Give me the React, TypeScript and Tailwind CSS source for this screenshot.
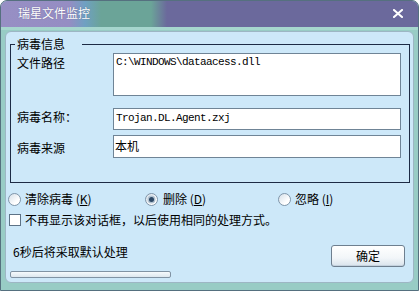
import React from "react";

function Radio({ checked }: { checked?: boolean }) {
  return (
    <span className="flex h-[13px] w-[13px] shrink-0 items-center justify-center rounded-full border border-[#7f95a9] bg-[linear-gradient(135deg,#d6e0e9,#ffffff_70%)]">
      {checked && (
        <span className="h-[5px] w-[5px] rounded-full bg-[#2e4966] shadow-[0_0_0_1.5px_#b4c4d2]" />
      )}
    </span>
  );
}

export default function App() {
  return (
    <div className="flex h-[291px] w-[419px] flex-col overflow-hidden rounded-t-[7px] border border-[#55707f] bg-[#98ccc5] text-[12px] leading-[16px] text-black [font-family:'Noto_Sans_CJK_SC',sans-serif]">
      {/* title bar */}
      <div className="flex h-[26px] shrink-0 items-center justify-between bg-[linear-gradient(90deg,#978fc4_0px,#958dc3_68px,#6fa0c2_84px,#6ba498_100px,#6ba498_150px,#6b699c_166px,#6b699c_100%)] pb-[3px] pl-[17px] pr-[15px]">
        <span className="text-[12px] leading-[16px] text-white [text-shadow:0_0_1px_rgba(40,40,80,0.5)]">
          瑞星文件监控
        </span>
        <svg width="10" height="9" viewBox="0 0 10 9" className="mt-[1px]">
          <path d="M1 1 L9 8 M9 1 L1 8" stroke="#ffffff" strokeWidth="2" strokeLinecap="square" />
        </svg>
      </div>

      {/* frame */}
      <div className="flex flex-1 flex-col border-t-[3px] border-[#a6d6ce] px-[4px] pb-[7px] pt-[1px]">
        <div className="flex flex-1 flex-col rounded-[6px] border border-[#9db6c4] bg-[#cde8f9]">
          {/* group box */}
          <fieldset className="ml-[4px] mr-[3px] mt-[4px] border border-[#1d2b45] pb-[24px] pl-[6px] pr-[7px] pt-[1px]">
            <legend className="-ml-[2px] pl-[2px] pr-[17px] leading-[16px]">病毒信息</legend>
            <div className="flex">
              <div className="w-[96px] pt-[2px]">文件路径</div>
              <div className="h-[43px] w-[288px] border border-[#6f8496] bg-white pl-[2px] pt-[1px] text-[11px] leading-[14px] tracking-[-0.6px] [font-family:'Liberation_Mono',monospace]">
                C:\WINDOWS\dataacess.dll
              </div>
            </div>
            <div className="mt-[12px] flex">
              <div className="w-[96px] pt-[1px]">病毒名称：</div>
              <div className="h-[22px] w-[288px] border border-[#6f8496] bg-white pl-[2px] pt-[2px] text-[11px] leading-[14px] tracking-[-0.6px] [font-family:'Liberation_Mono',monospace]">
                Trojan.DL.Agent.zxj
              </div>
            </div>
            <div className="mt-[5px] flex">
              <div className="w-[96px] pt-[5px]">病毒来源</div>
              <div className="h-[23px] w-[288px] border border-[#6f8496] bg-white pl-[1px] pt-[2px]">
                本机
              </div>
            </div>
          </fieldset>

          {/* radios */}
          <div className="mt-[8px] flex h-[16px] items-center pl-[2px]">
            <div className="flex w-[137px] items-center gap-[4px]">
              <Radio />
              <span>
                清除病毒 (<u>K</u>)
              </span>
            </div>
            <div className="flex w-[133px] items-center gap-[5px]">
              <Radio checked />
              <span>
                删除 (<u>D</u>)
              </span>
            </div>
            <div className="flex items-center gap-[4px]">
              <Radio />
              <span>
                忽略 (<u>I</u>)
              </span>
            </div>
          </div>

          {/* checkbox */}
          <div className="mt-[5px] flex h-[16px] items-center gap-[4px] pl-[3px]">
            <span className="h-[12px] w-[12px] shrink-0 border border-[#5d7286] bg-white" />
            <span>不再显示该对话框，以后使用相同的处理方式。</span>
          </div>

          {/* bottom */}
          <div className="mt-[16px] flex items-start justify-between pl-[4px] pr-[8px]">
            <div className="flex flex-col">
              <div className="pl-[3px]">6秒后将采取默认处理</div>
              <div className="mt-[11px] h-[7px] w-[161px] rounded-[2px] border border-[#8193a3] bg-[linear-gradient(180deg,#f6fafc,#dde7ee)]" />
            </div>
            <button className="mt-[1px] flex h-[22px] w-[74px] items-center justify-center rounded-[3px] border border-[#6e7f8f] bg-[linear-gradient(180deg,#ffffff,#f2f6f9_60%,#d9e3ec)] text-[12px] leading-[16px] shadow-[inset_0_-1px_0_#c5d2de]">
              确定
            </button>
          </div>
        </div>
      </div>
    </div>
  );
}
